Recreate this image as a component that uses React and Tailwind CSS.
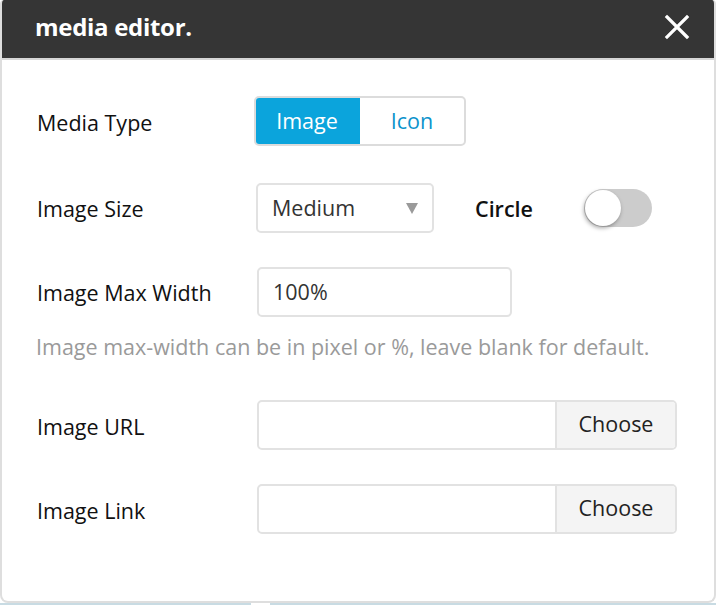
import React from "react";

export default function App() {
  const font = { fontFamily: '"Open Sans", "Noto Sans", sans-serif' };
  return (
    <div className="w-[716px] h-[605px] bg-white overflow-hidden relative" style={font}>
      <div className="w-[716px] h-[603px] flex flex-col border-x-2 border-b-2 border-[#dedede] rounded-t-[4px] rounded-b-[8px] bg-white overflow-hidden">
        <div className="h-[60px] shrink-0 bg-[#353535] border-b-2 border-[#d6d6d6] flex items-center justify-between pl-[35px] pr-[26px] -mx-[2px]">
          <span className="text-white font-bold text-[24px] leading-none tracking-[-0.3px] pb-[4px]">media editor.</span>
          <svg width="26" height="26" viewBox="0 0 26 26" className="mb-[4px]">
            <path d="M3 3 L23 23 M23 3 L3 23" stroke="white" strokeWidth="3.2" strokeLinecap="square" />
          </svg>
        </div>
        <div className="flex flex-col pl-[35px] pt-[36px] text-[21.5px] text-[#111]">
          <div className="flex items-center h-[50px]">
            <div className="w-[217px] pt-[5px]">Media Type</div>
            <div className="flex h-[50px] rounded-[5px] border-2 border-[#dcdcdc] overflow-hidden">
              <div className="w-[106px] bg-[#0ba4dc] text-white flex items-center justify-center -m-[2px] mr-0 rounded-l-[5px]">Image</div>
              <div className="w-[104px] text-[#0b93cc] flex items-center justify-center">Icon</div>
            </div>
          </div>
          <div className="flex items-center h-[50px] mt-[37px]">
            <div className="w-[219px] pt-[2px]">Image Size</div>
            <div className="w-[178px] h-[50px] border-2 border-[#e2e2e2] rounded-[5px] flex items-center justify-between pl-[14px] pr-[14px] text-[#333]">
              <span>Medium</span>
              <svg width="12" height="11" viewBox="0 0 12 11"><polygon points="0,0 12,0 6,11" fill="#9a9a9a" /></svg>
            </div>
            <div className="ml-[41px] w-[109px] font-semibold text-[#111] pt-[2px]">Circle</div>
            <div className="relative w-[68px] h-[38px] rounded-full bg-[#cccccc]">
              <div className="absolute left-[1px] top-[1px] w-[36px] h-[36px] rounded-full bg-white shadow-[-1px_2px_4px_rgba(0,0,0,0.35)]"></div>
            </div>
          </div>
          <div className="flex items-center h-[50px] mt-[34px]">
            <div className="w-[220px] pt-[2px]">Image Max Width</div>
            <div className="w-[255px] h-[50px] border-2 border-[#e2e2e2] rounded-[5px] flex items-center pl-[14px] text-[#333]">100%</div>
          </div>
          <div className="mt-[13px] text-[#9a9a9a] text-[21.5px] leading-[34px] -ml-[1px]">Image max-width can be in pixel or %, leave blank for default.</div>
          <div className="flex items-center h-[50px] mt-[36px]">
            <div className="w-[220px] pt-[4px]">Image URL</div>
            <div className="flex w-[420px] h-[50px] border-2 border-[#e2e2e2] rounded-[5px] overflow-hidden">
              <div className="flex-1"></div>
              <div className="w-[120px] bg-[#f4f4f4] border-l-2 border-[#e2e2e2] flex items-center justify-center text-[#222] pb-[2px]">Choose</div>
            </div>
          </div>
          <div className="flex items-center h-[50px] mt-[34px]">
            <div className="w-[220px] pt-[4px]">Image Link</div>
            <div className="flex w-[420px] h-[50px] border-2 border-[#e2e2e2] rounded-[5px] overflow-hidden">
              <div className="flex-1"></div>
              <div className="w-[120px] bg-[#f4f4f4] border-l-2 border-[#e2e2e2] flex items-center justify-center text-[#222] pb-[2px]">Choose</div>
            </div>
          </div>
        </div>
      </div>
      <div className="flex h-[2px]">
        <div className="w-[251px] bg-[#c8dbe3]"></div>
        <div className="w-[19px] bg-white"></div>
        <div className="flex-1 bg-[#c8dbe3]"></div>
      </div>
    </div>
  );
}
